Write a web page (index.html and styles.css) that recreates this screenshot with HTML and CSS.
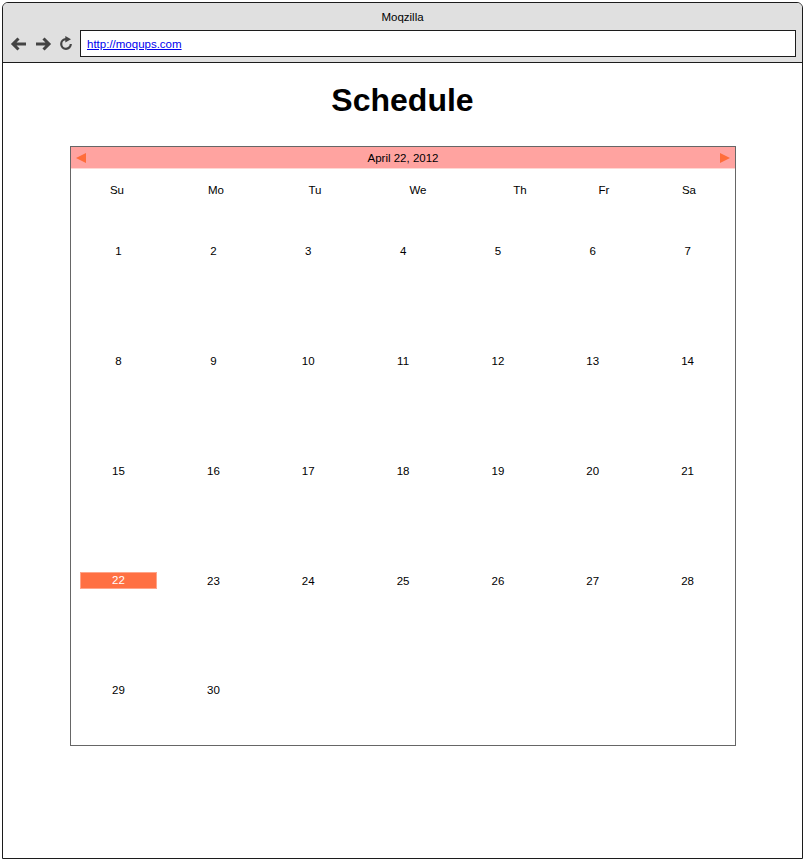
FILE: index.html
```html
<!DOCTYPE html>
<html>
<head>
<meta charset="utf-8">
<link rel="stylesheet" href="styles.css">
</head>
<body>
<div class="browser">
  <div class="chrome">
    <div class="title">Moqzilla</div>
    <div class="navrow">
      <div class="navicons">
        <svg width="18" height="16" viewBox="0 0 18 16"><path d="M16 8H3M8.5 2.5L3 8l5.5 5.5" fill="none" stroke="#444" stroke-width="3"/></svg>
        <svg width="18" height="16" viewBox="0 0 18 16"><path d="M2 8h13M9.5 2.5L15 8l-5.5 5.5" fill="none" stroke="#444" stroke-width="3"/></svg>
        <svg width="16" height="16" viewBox="0 0 16 16"><path d="M8 3.2A4.8 4.8 0 1 0 12.8 8" fill="none" stroke="#444" stroke-width="2.2"/><path d="M7.3 0L13 3.2 7.3 6.4z" fill="#444"/></svg>
      </div>
      <div class="url"><a href="#">http://moqups.com</a></div>
    </div>
  </div>
  <div class="page">
    <h1 class="heading">Schedule</h1>
    <div class="calendar">
      <div class="calhead">
        <span class="arrow left"></span>
        <span class="month">April 22, 2012</span>
        <span class="arrow right"></span>
      </div>
      <div class="daynames">
        <div>Su</div><div>Mo</div><div>Tu</div><div>We</div><div>Th</div><div>Fr</div><div>Sa</div>
      </div>
      <div class="days">
        <div class="day"><span>1</span></div><div class="day"><span>2</span></div><div class="day"><span>3</span></div><div class="day"><span>4</span></div><div class="day"><span>5</span></div><div class="day"><span>6</span></div><div class="day"><span>7</span></div>
        <div class="day"><span>8</span></div><div class="day"><span>9</span></div><div class="day"><span>10</span></div><div class="day"><span>11</span></div><div class="day"><span>12</span></div><div class="day"><span>13</span></div><div class="day"><span>14</span></div>
        <div class="day"><span>15</span></div><div class="day"><span>16</span></div><div class="day"><span>17</span></div><div class="day"><span>18</span></div><div class="day"><span>19</span></div><div class="day"><span>20</span></div><div class="day"><span>21</span></div>
        <div class="day"><span class="today">22</span></div><div class="day"><span>23</span></div><div class="day"><span>24</span></div><div class="day"><span>25</span></div><div class="day"><span>26</span></div><div class="day"><span>27</span></div><div class="day"><span>28</span></div>
        <div class="day"><span>29</span></div><div class="day"><span>30</span></div><div class="day"></div><div class="day"></div><div class="day"></div><div class="day"></div><div class="day"></div>
      </div>
    </div>
  </div>
</div>
</body>
</html>
```
FILE: styles.css
```css
* { box-sizing: border-box; }
html, body { margin: 0; padding: 0; background: #fff; }
body { font-family: "Liberation Sans", Arial, sans-serif; color: #000; }
.browser {
  margin: 2px 0 0 2px;
  width: 801px;
  height: 857px;
  border: 1px solid #1c1c1c;
  border-radius: 6px 6px 0 0;
  overflow: hidden;
  display: flex;
  flex-direction: column;
}
.chrome {
  background: #e0e0e0;
  height: 60px;
  border-bottom: 1px solid #1c1c1c;
  flex: none;
}
.title {
  text-align: center;
  font-size: 11.5px;
  line-height: 14px;
  padding-top: 7px;
  height: 27px;
}
.navrow { display: flex; align-items: center; }
.navicons {
  display: flex;
  align-items: center;
  gap: 6px;
  width: 77px;
  padding-left: 7px;
}
.url {
  width: 716px;
  height: 27px;
  background: #fff;
  border: 1px solid #1c1c1c;
  padding-left: 6px;
  display: flex;
  align-items: center;
  font-size: 11.5px;
}
.url a { color: #0000ee; text-decoration: underline; }
.page { flex: 1; }
.heading {
  margin: 0;
  text-align: center;
  font-size: 32px;
  font-weight: bold;
  line-height: 38px;
  padding-top: 18px;
  height: 83px;
}
.calendar {
  margin-left: 67px;
  width: 666px;
  height: 600px;
  border: 1px solid #666;
  overflow: hidden;
  font-size: 11.5px;
}
.calhead {
  height: 22px;
  background: #ffa3a0;
  border-bottom: 1px solid #ffd8d4;
  display: flex;
  align-items: center;
  justify-content: space-between;
  padding: 0 5px;
}
.month { line-height: 14px; }
.arrow { width: 0; height: 0; border-top: 5px solid transparent; border-bottom: 5px solid transparent; }
.arrow.left { border-right: 10px solid #ff6d3a; }
.arrow.right { border-left: 10px solid #ff6d3a; }
.daynames {
  display: grid;
  grid-template-columns: 92px 106px 92px 114px 90px 78px 92px;
  height: 27.5px;
  padding-top: 14px;
  line-height: 14px;
  text-align: center;
}
.days {
  display: grid;
  grid-template-columns: repeat(7, 1fr);
  grid-auto-rows: 109.75px;
}
.day {
  display: flex;
  align-items: center;
  justify-content: center;
  padding: 0 9px 0 9px;
}
.day span { display: block; width: 100%; text-align: center; line-height: 14px; }
.day span.today {
  background: #ff7043;
  color: #fff;
  border: 1px solid #ffa58a;
  line-height: 15px;
  height: 17px;
  width: 77px;
}
```
